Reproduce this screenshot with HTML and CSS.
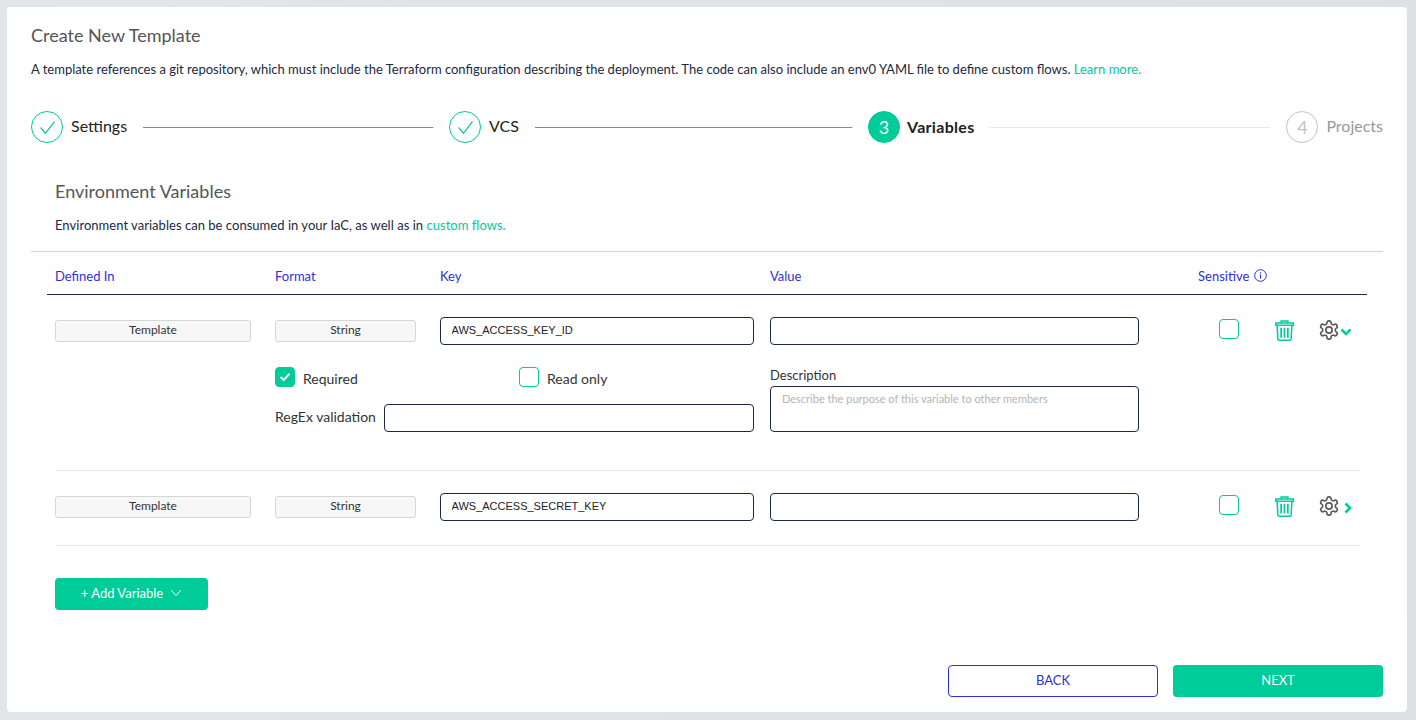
FILE: index.html
```html
<!DOCTYPE html>
<html>
<head>
<meta charset="UTF-8">
<title>Create New Template</title>
<link rel="stylesheet" href="styles.css">
</head>

<body>

<svg class="defs" width="0" height="0">
  <symbol id="gear" viewBox="0 0 24 24">
    <path d="M12.22 2h-.44a2 2 0 0 0-2 2v.18a2 2 0 0 1-1 1.73l-.43.25a2 2 0 0 1-2 0l-.15-.08a2 2 0 0 0-2.73.73l-.22.38a2 2 0 0 0 .73 2.73l.15.1a2 2 0 0 1 1 1.72v.51a2 2 0 0 1-1 1.74l-.15.09a2 2 0 0 0-.73 2.73l.22.38a2 2 0 0 0 2.73.73l.15-.08a2 2 0 0 1 2 0l.43.25a2 2 0 0 1 1 1.73V20a2 2 0 0 0 2 2h.44a2 2 0 0 0 2-2v-.18a2 2 0 0 1 1-1.73l.43-.25a2 2 0 0 1 2 0l.15.08a2 2 0 0 0 2.73-.73l.22-.39a2 2 0 0 0-.73-2.73l-.15-.08a2 2 0 0 1-1-1.74v-.5a2 2 0 0 1 1-1.74l.15-.09a2 2 0 0 0 .73-2.73l-.22-.38a2 2 0 0 0-2.73-.73l-.15.08a2 2 0 0 1-2 0l-.43-.25a2 2 0 0 1-1-1.73V4a2 2 0 0 0-2-2z" fill="none" stroke="#595959" stroke-width="1.8"/>
    <circle cx="12" cy="12" r="3.4" fill="none" stroke="#595959" stroke-width="1.8"/>
  </symbol>
  <symbol id="trash" viewBox="0 0 20 22">
    <g fill="none" stroke="#00cc99" stroke-width="1.6">
      <path d="M6.5 3V1h7v2"/>
      <path d="M.8 3h18.4v2.4H.8z"/>
      <path d="M2.2 5.4 3 19.6a1.6 1.6 0 0 0 1.6 1.6h10.8a1.6 1.6 0 0 0 1.6-1.6l.8-14.2"/>
      <path d="M6.5 8v10.5M10 8v10.5M13.5 8v10.5" stroke-width="1.9"/>
    </g>
  </symbol>
</svg>

<div class="card">
  <h1 class="title">Create New Template</h1>
  <p class="intro">A template references a git repository, which must include the Terraform configuration describing the deployment. The code can also include an env0 YAML file to define custom flows. <a href="#">Learn more.</a></p>

  <div class="steps">
    <div class="step">
      <span class="dot"><svg width="17" height="15" viewBox="0 0 16 14"><path d="M1.5 7 6 12.5 14.5 1.5" fill="none" stroke="#00cc99" stroke-width="1.2"/></svg></span>
      <span class="step-name">Settings</span>
    </div>
    <div class="line l1"></div>
    <div class="step">
      <span class="dot"><svg width="17" height="15" viewBox="0 0 16 14"><path d="M1.5 7 6 12.5 14.5 1.5" fill="none" stroke="#00cc99" stroke-width="1.2"/></svg></span>
      <span class="step-name">VCS</span>
    </div>
    <div class="line l2"></div>
    <div class="step">
      <span class="dot current">3</span>
      <span class="step-name strong">Variables</span>
    </div>
    <div class="line l3 off"></div>
    <div class="step">
      <span class="dot todo">4</span>
      <span class="step-name muted">Projects</span>
    </div>
  </div>

  <div class="section">
    <h2 class="subtitle">Environment Variables</h2>
    <p class="intro small">Environment variables can be consumed in your IaC, as well as in <a href="#">custom flows.</a></p>
  </div>

  <div class="rule"></div>

  <div class="table">
    <div class="head grid">
      <span>Defined In</span>
      <span>Format</span>
      <span>Key</span>
      <span>Value</span>
      <span class="sens">Sensitive
        <svg width="13" height="13" viewBox="0 0 13 13"><circle cx="6.5" cy="6.5" r="5.8" fill="none" stroke="#2f2fd8" stroke-width="1"/><path d="M6.5 5.5v4M6.5 3.2v1.2" stroke="#2f2fd8" stroke-width="1.1"/></svg>
      </span>
    </div>

    <div class="row open">
      <div class="grid">
        <div class="chip wide">Template</div>
        <div class="chip">String</div>
        <input class="field" value="AWS_ACCESS_KEY_ID">
        <input class="field val">
        <div class="acts">
          <span class="box"></span>
          <svg class="trash" width="19" height="21"><use href="#trash"/></svg>
          <svg class="gear" width="22" height="22"><use href="#gear"/></svg>
          <svg class="chev" width="12" height="8" viewBox="0 0 12 8"><path d="M1.5 1.5 6 6l4.5-4.5" fill="none" stroke="#00cc99" stroke-width="2.6"/></svg>
        </div>
      </div>
      <div class="grid extra">
        <div class="opts">
          <div class="checks">
            <label class="check"><span class="box on"><svg width="12" height="10" viewBox="0 0 12 10"><path d="M1.5 5 4.7 8 10.5 1.8" fill="none" stroke="#fff" stroke-width="2"/></svg></span><span class="check-text">Required</span></label>
            <label class="check"><span class="box"></span><span class="check-text">Read only</span></label>
          </div>
          <div class="regex">
            <span class="regex-label">RegEx validation</span>
            <input class="field grow">
          </div>
        </div>
        <div class="desc">
          <span>Description</span>
          <textarea class="field area" placeholder="Describe the purpose of this variable to other members"></textarea>
        </div>
      </div>
    </div>

    <div class="row">
      <div class="grid">
        <div class="chip wide">Template</div>
        <div class="chip">String</div>
        <input class="field" value="AWS_ACCESS_SECRET_KEY">
        <input class="field val">
        <div class="acts">
          <span class="box"></span>
          <svg class="trash" width="19" height="21"><use href="#trash"/></svg>
          <svg class="gear" width="22" height="22"><use href="#gear"/></svg>
          <svg class="chev side" width="8" height="12" viewBox="0 0 8 12"><path d="M1.5 1.5 6 6l-4.5 4.5" fill="none" stroke="#00cc99" stroke-width="2.6"/></svg>
        </div>
      </div>
    </div>

    <button class="btn add">+ Add Variable
      <svg width="12" height="8" viewBox="0 0 12 8"><path d="M1 1l5 5.6L11 1" fill="none" stroke="#fff" stroke-width="1"/></svg>
    </button>
  </div>

  <div class="footer">
    <button class="btn back">BACK</button>
    <button class="btn next">NEXT</button>
  </div>
</div>

</body>
</html>
```

FILE: styles.css
```css
* { box-sizing: border-box; }
html, body { height: 100%; }
body { margin: 0; padding: 7px 9px 8px 7px; background: linear-gradient(100deg, #e2e6e9, #dde1e4); font-family: "Lato", "Liberation Sans", sans-serif; color: #1b2a41; overflow: hidden; }
.defs { position: absolute; }
a { color: #00cc99; text-decoration: none; }

.card { height: 705px; background: #fff; border-radius: 4px; padding: 18px 24px 0; display: flex; flex-direction: column; }
.title { margin: 0; font-size: 18px; line-height: 20px; font-weight: 400; color: #555; }
.intro { margin: 15px 0 0; font-size: 13px; line-height: 18px; }

.steps { display: flex; align-items: center; margin-top: 33px; height: 32px; }
.step { display: flex; align-items: center; gap: 8px; font-size: 16px; color: #222; }
.dot { width: 32px; height: 32px; border-radius: 50%; border: 1px solid #00cc99; display: flex; align-items: center; justify-content: center; font-size: 18px; }
.dot.current { background: #00cc99; color: #fff; }
.dot.todo { border-color: #c4c4c4; color: #c4c4c4; }
.step-name { margin-top: -4px; }
.step-name.strong { font-weight: 700; letter-spacing: .3px; margin-left: -1px; margin-top: -2px; }
.step-name.muted { color: #999; }
.line { height: 1px; background: #00cc99; margin: 1px 16px 0; }
.l1 { width: 290px; }
.l2 { width: 317px; }
.l3 { flex: 1; margin-left: 15px; }
.line.off { background: #e9e9e9; }

.section { padding-left: 24px; margin-top: 38px; }
.subtitle { margin: 0; font-size: 18px; line-height: 20px; font-weight: 400; color: #555; }
.intro.small { margin-top: 15px; letter-spacing: .03px; }
.rule { height: 1px; background: #ced4da; margin-top: 17px; }

.table { padding: 0 16px; }
.grid { display: grid; grid-template-columns: 220px 165px 330px 428px 1fr; padding: 0 8px; align-items: start; }
.head { height: 43px; border-bottom: 1px solid #1b2a41; align-items: center; color: #2f2fd8; font-size: 13px; padding-top: 5px; }
.sens { display: flex; align-items: center; gap: 5px; white-space: nowrap; }

.row { border-bottom: 1px solid #ececec; margin: 0 7px 0 8px; }
.row .grid { padding: 0; align-items: center; }
.row.open { height: 176px; padding-top: 22px; }
.row:not(.open) { height: 75px; padding-top: 22px; }

.chip { width: 141px; height: 22px; background: #f7f7f7; border: 1px solid #d6d6d6; border-radius: 3px; font-size: 12px; line-height: 18px; text-align: center; color: #333; }
.chip.wide { width: 196px; }
.field { width: 314px; height: 28px; border: 1px solid #1b2a41; border-radius: 4px; padding: 0 10.5px 2px; font-family: "Liberation Sans", sans-serif; font-size: 11px; color: #222; background: #fff; outline: none; }
.field.val { width: 369px; }

.acts { display: flex; align-items: center; padding-left: 21px; margin-bottom: 2px; }
.acts > .box { margin-bottom: 2px; }
.box { width: 20px; height: 20px; border: 1px solid #00cc99; border-radius: 4px; display: flex; align-items: center; justify-content: center; flex: none; }
.box.on { background: #00cc99; }
.trash { margin-left: 36px; }
.gear { margin-left: 24px; }
.chev { margin-top: 3px; }
.chev.side { margin-left: 4px; }

.extra { margin-top: 22px; grid-template-columns: 220px 495px 1fr; }
.opts { grid-column: 2; width: 479px; }
.checks { display: flex; }
.check { display: flex; align-items: center; gap: 8px; width: 244px; flex: none; font-size: 14px; color: #333; }
.check-text { margin-top: 2px; }
.regex { display: flex; align-items: center; gap: 8px; margin-top: 17px; font-size: 14px; color: #333; }
.regex-label { margin-top: -3px; }
.field.grow { flex: 1; width: auto; }
.desc { grid-column: 3; align-self: start; font-size: 13px; color: #333; }
.desc span { display: block; line-height: 16px; margin-bottom: 3px; }
.field.area { display: block; width: 369px; height: 46px; padding: 5px 11px; resize: none; font-family: "Lato", sans-serif; }
.field.area::placeholder { color: #b5b5b5; }

.btn { height: 32px; border-radius: 4px; padding-bottom: 3px; font-family: "Lato", sans-serif; font-size: 13px; border: none; cursor: pointer; }
.add { display: flex; align-items: center; justify-content: center; gap: 7px; width: 153px; margin: 32px 0 0 8px; background: #00cc99; color: #fff; }

.footer { display: flex; justify-content: flex-end; gap: 15px; margin-top: 55px; }
.back { width: 210px; background: #fff; border: 1px solid #2f2fd8; color: #2f2fd8; }
.next { width: 210px; background: #00cc99; color: #fff; }
```
